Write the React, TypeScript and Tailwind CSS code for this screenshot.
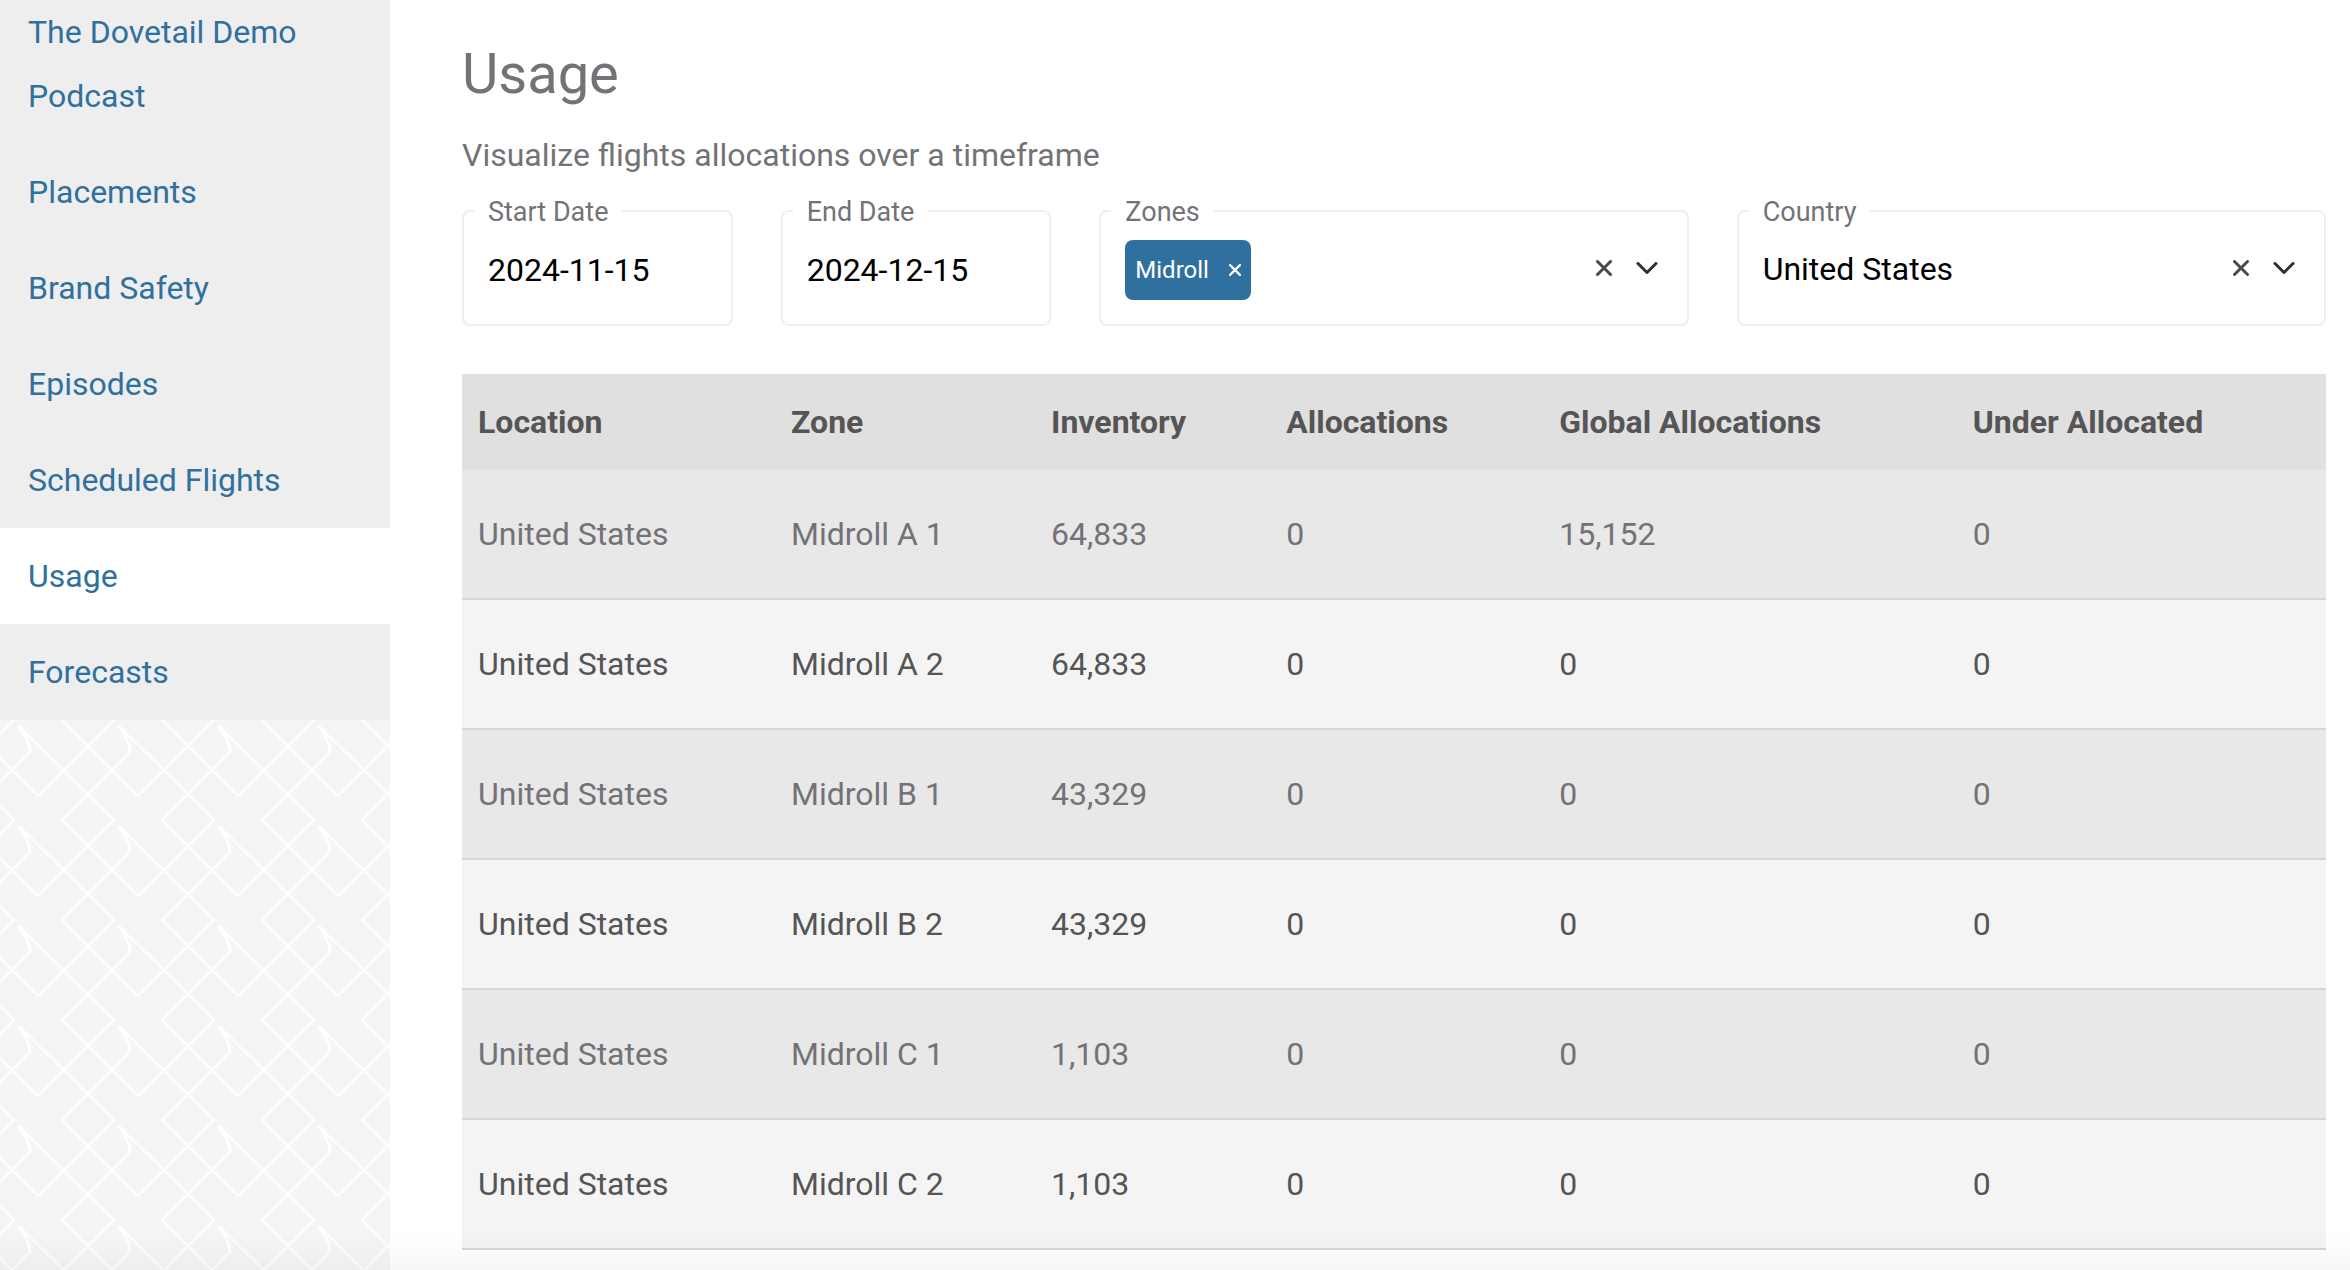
import { useId, useState } from "react";

const navItems = [
  { label: "Placements" },
  { label: "Brand Safety" },
  { label: "Episodes" },
  { label: "Scheduled Flights" },
  { label: "Usage", active: true },
  { label: "Forecasts" },
];

const columns = ["Location", "Zone", "Inventory", "Allocations", "Global Allocations", "Under Allocated"];

const rows = [
  ["United States", "Midroll A 1", "64,833", "0", "15,152", "0"],
  ["United States", "Midroll A 2", "64,833", "0", "0", "0"],
  ["United States", "Midroll B 1", "43,329", "0", "0", "0"],
  ["United States", "Midroll B 2", "43,329", "0", "0", "0"],
  ["United States", "Midroll C 1", "1,103", "0", "0", "0"],
  ["United States", "Midroll C 2", "1,103", "0", "0", "0"],
];

const birdOffsets = [
  [0, 0], [100, 0], [-100, 0],
  [0, -100], [100, -100], [-100, -100],
];

/** Repeating 100px tile of overlapping bird outlines. */
function BirdPattern() {
  const id = useId();
  return (
    <svg className="h-full w-full" aria-hidden="true">
      <defs>
        <pattern id={id} width="100" height="100" patternUnits="userSpaceOnUse">
          {birdOffsets.map(([x, y]) => (
            <g key={`${x},${y}`} transform={`translate(${x} ${y})`} fill="none" stroke="#fff" strokeLinejoin="round">
              <path strokeWidth="2" d="M20 7 L114 100 L38 176 L-38 100 L30 32" />
              <path strokeWidth="3" strokeLinecap="round" d="M30 31 C29 22 25 14 19.500 7" />
            </g>
          ))}
        </pattern>
      </defs>
      <rect width="100%" height="100%" fill={`url(#${id})`} />
    </svg>
  );
}

function CrossIcon({ className }: { className: string }) {
  return (
    <svg viewBox="0 0 16 16" className={className} fill="none" stroke="currentColor" strokeWidth="3" strokeLinecap="round" aria-hidden="true">
      <path d="M1.500 1.500 L14.500 14.500 M14.500 1.500 L1.500 14.500" />
    </svg>
  );
}

function ChevronIcon() {
  return (
    <svg viewBox="0 0 22 12" className="h-3 w-[22px]" fill="none" stroke="currentColor" strokeWidth="3" strokeLinecap="round" strokeLinejoin="round" aria-hidden="true">
      <path d="M2 1.500 L11 10.500 L20 1.500" />
    </svg>
  );
}

function Field({ label, htmlFor, className, children }: { label: string; htmlFor: string; className: string; children: React.ReactNode }) {
  return (
    <fieldset className={`min-w-0 rounded-lg border-2 border-[#eeeeee] ${className}`}>
      <legend className="ml-[10px] px-[14px] pt-0.5 text-[27px] leading-8 text-[#737277]">
        <label htmlFor={htmlFor}>{label}</label>
      </legend>
      <div className="flex items-center px-6 pt-3 pb-6">{children}</div>
    </fieldset>
  );
}

function FieldActions({ label, onClear }: { label: string; onClear: () => void }) {
  return (
    <div className="flex h-14 shrink-0 items-center gap-6 self-start pr-[5px]">
      <button type="button" aria-label={`Clear ${label}`} onClick={onClear} className="text-[#4a4a4a]">
        <CrossIcon className="size-4" />
      </button>
      <button type="button" aria-label={`Open ${label}`} className="text-[#303030]">
        <ChevronIcon />
      </button>
    </div>
  );
}

export default function App() {
  const [start, setStart] = useState("2024-11-15");
  const [end, setEnd] = useState("2024-12-15");
  const [zones, setZones] = useState(["Midroll"]);
  const [country, setCountry] = useState("United States");

  return (
    <div className="relative flex min-h-screen bg-white font-[Roboto,sans-serif] text-[32px]">
      <aside className="flex w-[390px] shrink-0 flex-col bg-[#f5f5f5]">
        <nav className="flex flex-col bg-[#eeeeee] leading-[64px] text-[#30709f]">
          <a href="#podcast" className="px-7 pb-4">The Dovetail Demo Podcast</a>
          {navItems.map((item) => (
            <a
              key={item.label}
              href={`#${item.label.toLowerCase().replace(" ", "-")}`}
              aria-current={item.active ? "page" : undefined}
              className={item.active ? "bg-white px-7 py-4" : "px-7 py-4"}
            >
              {item.label}
            </a>
          ))}
        </nav>
        <div className="min-h-0 flex-1">
          <BirdPattern />
        </div>
      </aside>

      <main className="min-w-0 flex-1 pt-10 pr-6 pl-[72px]">
        <h1 className="text-[56px] leading-[68px] text-[#737277]">Usage</h1>
        <p className="mt-[22px] leading-[50px] text-[#737277]">Visualize flights allocations over a timeframe</p>

        <form className="mt-[14px] grid grid-cols-6 gap-12">
          <Field label="Start Date" htmlFor="start-date" className="col-span-1">
            <input id="start-date" value={start} onChange={(e) => setStart(e.target.value)} className="h-[60px] w-full min-w-0 text-black outline-none" />
          </Field>
          <Field label="End Date" htmlFor="end-date" className="col-span-1">
            <input id="end-date" value={end} onChange={(e) => setEnd(e.target.value)} className="h-[60px] w-full min-w-0 text-black outline-none" />
          </Field>
          <Field label="Zones" htmlFor="zones" className="col-span-2">
            {zones.map((zone) => (
              <span key={zone} className="flex h-[60px] items-center gap-5 rounded-lg bg-[#30709f] px-[10px] text-2xl text-white">
                {zone}
                <button type="button" aria-label={`Remove ${zone}`} onClick={() => setZones(zones.filter((z) => z !== zone))}>
                  <CrossIcon className="size-3" />
                </button>
              </span>
            ))}
            <input id="zones" role="combobox" aria-expanded="false" aria-controls="zones" className="h-[60px] min-w-0 flex-1 outline-none" />
            <FieldActions label="zones" onClear={() => setZones([])} />
          </Field>
          <Field label="Country" htmlFor="country" className="col-span-2">
            <select id="country" value={country} onChange={(e) => setCountry(e.target.value)} className="h-[60px] min-w-0 flex-1 appearance-none pb-0.5 text-black outline-none">
              <option value=""></option>
              <option>United States</option>
            </select>
            <FieldActions label="country" onClear={() => setCountry("")} />
          </Field>
        </form>

        <table className="mt-12 w-full border-separate border-spacing-0 text-left">
          <thead>
            <tr className="h-24 bg-[#e0e0e0] text-[#555555]">
              {columns.map((c) => (
                <th key={c} scope="col" className="px-4 font-bold">{c}</th>
              ))}
            </tr>
          </thead>
          <tbody>
            {rows.map((row, i) => (
              <tr
                key={row[1]}
                className={i % 2 === 0 ? "h-[130px] bg-[#e8e8e8] text-[#737277]" : "h-[130px] bg-[#f4f4f4] text-[#555555]"}
              >
                {row.map((cell, j) => (
                  <td key={j} className="border-b-2 border-[#d6d6d6] px-4">{cell}</td>
                ))}
              </tr>
            ))}
          </tbody>
        </table>
      </main>
      <div className="pointer-events-none absolute inset-x-0 bottom-0 h-10 bg-linear-to-b from-transparent to-black/3" />
    </div>
  );
}
